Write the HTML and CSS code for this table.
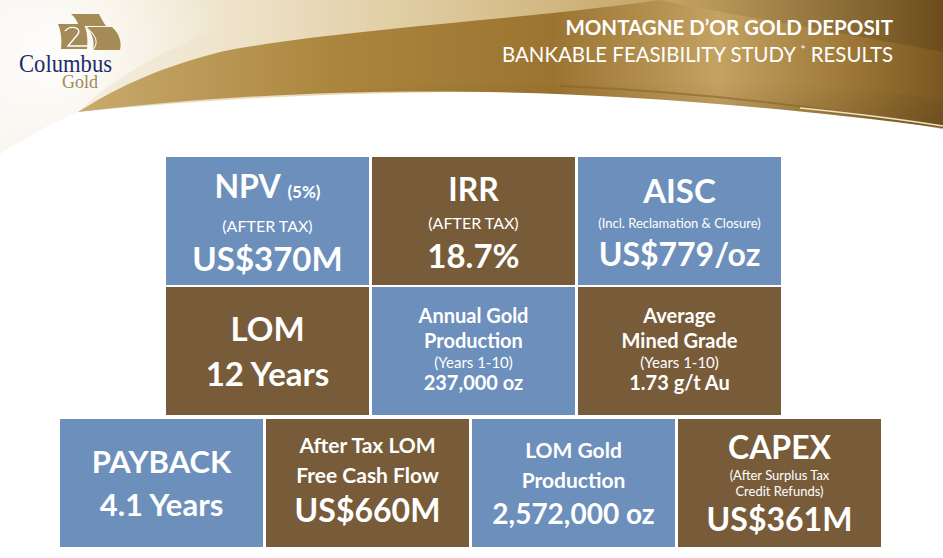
FILE: index.html
```html
<!DOCTYPE html>
<html lang="en">
<head>
<meta charset="utf-8">
<title>Montagne d'Or Gold Deposit</title>
<link rel="stylesheet" href="styles.css">
</head>
<body>
<div class="slide">
  <header class="header">
    <svg class="swoosh" width="943" height="157" viewBox="0 0 943 157" aria-hidden="true">
      <defs>
        <linearGradient id="topg" x1="0" y1="0" x2="1" y2="0">
          <stop offset="0" stop-color="#f8f4ec"/>
          <stop offset="0.25" stop-color="#eee3c9"/>
          <stop offset="0.5" stop-color="#dac494"/>
          <stop offset="0.72" stop-color="#c2a263"/>
          <stop offset="1" stop-color="#6c4c1a"/>
        </linearGradient>
        <linearGradient id="bandg" x1="0" y1="0" x2="1" y2="0">
          <stop offset="0" stop-color="#c9ab6d"/>
          <stop offset="0.3" stop-color="#ab853d"/>
          <stop offset="0.55" stop-color="#9b7431"/>
          <stop offset="0.74" stop-color="#c4a262"/>
          <stop offset="0.88" stop-color="#a07b3a"/>
          <stop offset="1" stop-color="#7a5720"/>
        </linearGradient>
        <radialGradient id="glow" cx="60" cy="55" r="170" gradientUnits="userSpaceOnUse">
          <stop offset="0" stop-color="#ffffff" stop-opacity="0.9"/>
          <stop offset="0.6" stop-color="#ffffff" stop-opacity="0.3"/>
          <stop offset="1" stop-color="#ffffff" stop-opacity="0"/>
        </radialGradient>
        <linearGradient id="fadeg" x1="0" y1="0" x2="0" y2="1">
          <stop offset="0" stop-color="#000" stop-opacity="0"/>
          <stop offset="1" stop-color="#000" stop-opacity="0.12"/>
        </linearGradient>
      </defs>
      <path d="M0,0 H943 V128 C760,92 450,76 78,112 C50,124 25,138 0,154 Z" fill="url(#topg)"/>
      <path d="M78,112 C300,86 560,78 943,128 V52 C860,36 760,20 660,0 C520,20 330,30 220,52 C150,70 110,92 78,112 Z" fill="url(#bandg)"/>
      <path d="M78,112 C300,86 560,78 943,128 V100 C760,72 500,72 78,112 Z" fill="url(#fadeg)"/>
      <path d="M560,86 C700,92 830,108 943,128" fill="none" stroke="#8a6226" stroke-width="2" opacity="0.6"/>
      <path d="M800,108 C860,114 905,120 943,126" fill="none" stroke="#efe3c6" stroke-width="1.5"/>
      <path d="M0,0 H300 C200,30 120,70 78,112 C50,124 25,138 0,154 Z" fill="url(#glow)"/>
    </svg>
    <div class="logo">
      <svg class="logo-svg" width="110" height="80" viewBox="17 12 110 80" role="img" aria-label="Columbus Gold">
        <path d="M71,14 L99,14 C101,18 103,22 106,26 L79,26 C77,21 75,17 71,14 Z" fill="#a58b57"/>
        <path d="M58,24 L84,24 C87,31 88,39 87,49 L61,49 C62,40 61,31 58,24 Z" fill="#a58b57"/>
        <path d="M87,27 L112,27 C119,33 122,42 120,50 L93,50 C95,42 92,33 87,27 Z" fill="#a58b57"/>
        <path d="M65,31 C70,25 82,27 78,34 L68,46 L88,46" fill="none" stroke="#fff" stroke-width="1.4"/>
        <path d="M85,26 L93,34 C97,39 97,45 93,50" fill="none" stroke="#f3ecdc" stroke-width="1.2"/>
        <text class="logo-name" x="19" y="72" textLength="93" lengthAdjust="spacingAndGlyphs">Columbus</text>
        <text class="logo-gold" x="62" y="88" textLength="36" lengthAdjust="spacingAndGlyphs">Gold</text>
      </svg>
    </div>
    <div class="title">
      <div class="title-main">MONTAGNE D’OR GOLD DEPOSIT</div>
      <div class="title-sub">BANKABLE FEASIBILITY STUDY <sup class="star">*</sup> RESULTS</div>
    </div>
  </header>

  <main class="board">
    <section class="grid grid-top">
      <div class="cell blue">
        <div class="l-head">NPV <span class="paren">(5%)</span></div>
        <div class="l-note">(AFTER TAX)</div>
        <div class="l-value">US$370M</div>
      </div>
      <div class="cell brown">
        <div class="l-head">IRR</div>
        <div class="l-note">(AFTER TAX)</div>
        <div class="l-value">18.7%</div>
      </div>
      <div class="cell blue">
        <div class="l-head l-head-lg">AISC</div>
        <div class="l-small">(Incl. Reclamation &amp; Closure)</div>
        <div class="l-value l-value-aisc">US$779/oz</div>
      </div>
      <div class="cell brown">
        <div class="l-pair">LOM</div>
        <div class="l-pair">12 Years</div>
      </div>
      <div class="cell blue cell-lift">
        <div class="l-mid">Annual Gold</div>
        <div class="l-mid">Production</div>
        <div class="l-years">(Years 1-10)</div>
        <div class="l-midval">237,000 oz</div>
      </div>
      <div class="cell brown cell-lift">
        <div class="l-mid">Average</div>
        <div class="l-mid">Mined Grade</div>
        <div class="l-years">(Years 1-10)</div>
        <div class="l-midval">1.73 g/t Au</div>
      </div>
    </section>

    <section class="grid grid-bottom">
      <div class="cell blue">
        <div class="l-pair2">PAYBACK</div>
        <div class="l-pair2">4.1 Years</div>
      </div>
      <div class="cell brown cell-lift">
        <div class="l-mid2">After Tax LOM</div>
        <div class="l-mid2">Free Cash Flow</div>
        <div class="l-value l-value-b">US$660M</div>
      </div>
      <div class="cell blue">
        <div class="l-mid2">LOM Gold</div>
        <div class="l-mid2">Production</div>
        <div class="l-oz">2,572,000 oz</div>
      </div>
      <div class="cell brown">
        <div class="l-head l-head-capex">CAPEX</div>
        <div class="l-small2">(After Surplus Tax</div>
        <div class="l-small2">Credit Refunds)</div>
        <div class="l-value l-value-capex">US$361M</div>
      </div>
    </section>
  </main>
</div>
</body>
</html>
```

FILE: styles.css
```css
* { box-sizing: border-box; }

html, body {
  margin: 0;
  padding: 0;
  background: #ffffff;
}

.slide {
  width: 943px;
  height: 558px;
  overflow: hidden;
  font-family: Lato, "Open Sans", "Liberation Sans", sans-serif;
  color: #ffffff;
}

/* ---------- header ---------- */
.header {
  position: relative;
  height: 157px;
  display: flex;
  justify-content: space-between;
  align-items: flex-start;
}

.swoosh {
  position: absolute;
  left: 0;
  top: 0;
  z-index: 0;
}

.logo {
  position: relative;
  z-index: 1;
  margin-left: 17px;
  padding-top: 12px;
}

.logo-svg { display: block; }

.logo-name {
  font-family: "Liberation Serif", "Times New Roman", serif;
  font-size: 26px;
  fill: #1d2a6e;
}

.logo-gold {
  font-family: "Liberation Serif", "Times New Roman", serif;
  font-size: 19.5px;
  fill: #a0895a;
}

.title {
  position: relative;
  z-index: 1;
  margin-right: 50px;
  padding-top: 14px;
  text-align: right;
  color: #ffffff;
}

.title-main {
  font-weight: 700;
  font-size: 20.5px;
  line-height: 26px;
}

.title-sub {
  font-weight: 400;
  font-size: 20.4px;
  line-height: 28px;
}

.star {
  font-size: 12px;
  line-height: 0;
  vertical-align: 8px;
}

/* ---------- board ---------- */
.board {
  display: flex;
  flex-direction: column;
}

.grid {
  display: grid;
  grid-auto-rows: 128px;
}

.grid-top {
  grid-template-columns: repeat(3, 203px);
  column-gap: 3px;
  row-gap: 2px;
  margin-left: 166px;
}

.grid-bottom {
  grid-template-columns: repeat(4, 203px);
  column-gap: 3px;
  margin-left: 60px;
  margin-top: 4px;
}

.cell {
  display: flex;
  flex-direction: column;
  justify-content: center;
  align-items: center;
  text-align: center;
  white-space: nowrap;
}

.cell-lift { padding-bottom: 6px; }

.blue { background: #6d8fbc; }
.brown { background: #785c3a; }

.l-head {
  font-weight: 700;
  font-size: 32px;
  line-height: 40px;
}

.l-head-lg { font-size: 33px; line-height: 42px; }

.paren {
  font-size: 17px;
}

.l-note {
  font-size: 16px;
  line-height: 27px;
}

.l-small {
  font-size: 13px;
  line-height: 24px;
}

.l-value {
  font-weight: 700;
  font-size: 33px;
  line-height: 38px;
}

.l-value-aisc { font-size: 32px; }

.l-pair {
  font-weight: 700;
  font-size: 33px;
  line-height: 45px;
}

.l-mid {
  font-weight: 700;
  font-size: 20px;
  line-height: 25px;
}

.l-years {
  font-size: 15px;
  line-height: 19px;
}

.l-midval {
  font-weight: 700;
  font-size: 20px;
  line-height: 21px;
}

.l-pair2 {
  font-weight: 700;
  font-size: 31px;
  line-height: 43px;
}

.l-mid2 {
  font-weight: 700;
  font-size: 21px;
  line-height: 30px;
}

.l-value-b { font-size: 32px; line-height: 40px; }

.l-oz {
  font-weight: 700;
  font-size: 28px;
  line-height: 36px;
}

.l-head-capex { font-size: 32px; line-height: 40px; }

.l-small2 {
  font-size: 13px;
  line-height: 16px;
}

.l-value-capex { font-size: 32px; line-height: 40px; }
```
